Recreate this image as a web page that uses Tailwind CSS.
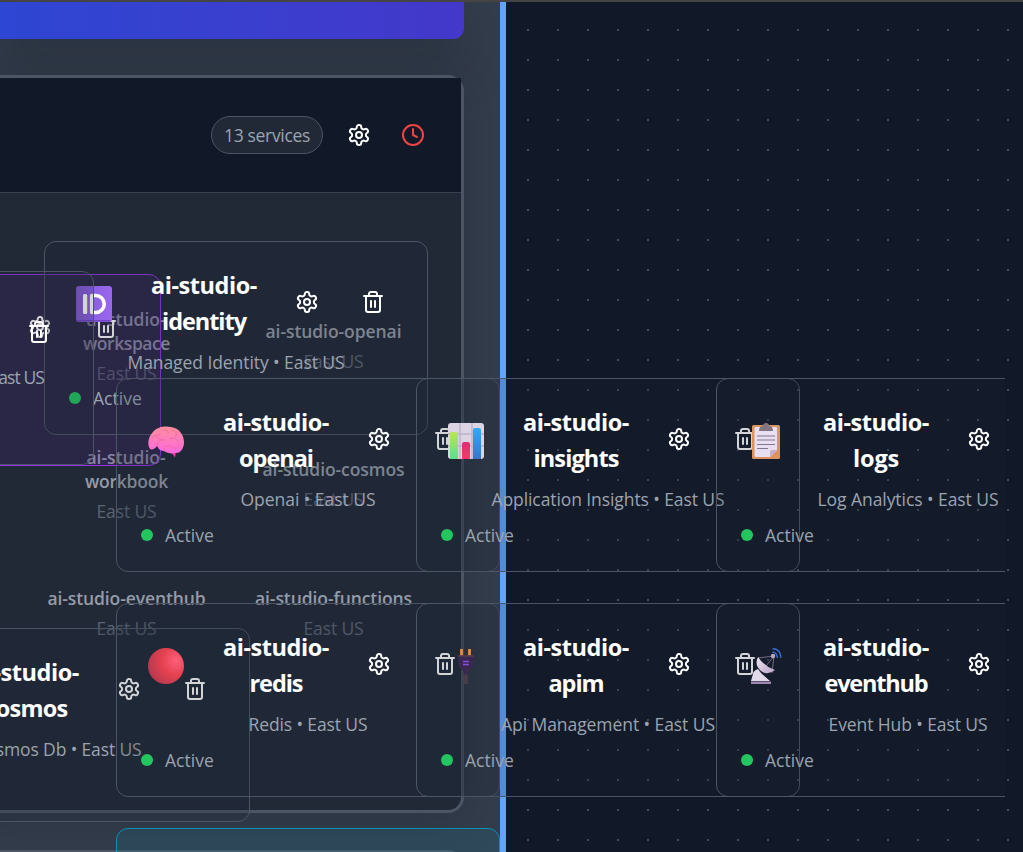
<!DOCTYPE html>
<html lang="en">
<head>
<meta charset="utf-8">
<title>AI Studio architecture</title>
<script src="https://cdn.jsdelivr.net/npm/@tailwindcss/browser@4"></script>
</head>
<body class="bg-[#111827] overflow-hidden font-['Open_Sans','Noto_Sans',sans-serif]">
<svg class="absolute size-0">
  <defs>
    <symbol id="gear" viewBox="0 0 24 24" fill="none" stroke="currentColor" stroke-width="2" stroke-linecap="round" stroke-linejoin="round"><path d="M12.22 2h-.44a2 2 0 0 0-2 2v.18a2 2 0 0 1-1 1.73l-.43.25a2 2 0 0 1-2 0l-.15-.08a2 2 0 0 0-2.73.73l-.22.38a2 2 0 0 0 .73 2.73l.15.1a2 2 0 0 1 1 1.72v.51a2 2 0 0 1-1 1.74l-.15.09a2 2 0 0 0-.73 2.73l.22.38a2 2 0 0 0 2.73.73l.15-.08a2 2 0 0 1 2 0l.43.25a2 2 0 0 1 1 1.73V20a2 2 0 0 0 2 2h.44a2 2 0 0 0 2-2v-.18a2 2 0 0 1 1-1.73l.43-.25a2 2 0 0 1 2 0l.15.08a2 2 0 0 0 2.73-.73l.22-.39a2 2 0 0 0-.73-2.73l-.15-.08a2 2 0 0 1-1-1.74v-.5a2 2 0 0 1 1-1.74l.15-.09a2 2 0 0 0 .73-2.73l-.22-.38a2 2 0 0 0-2.73-.73l-.15.08a2 2 0 0 1-2 0l-.43-.25a2 2 0 0 1-1-1.73V4a2 2 0 0 0-2-2z"/><circle cx="12" cy="12" r="3"/></symbol>
    <symbol id="trash" viewBox="0 0 24 24" fill="none" stroke="currentColor" stroke-width="2" stroke-linecap="round" stroke-linejoin="round"><path d="M3 6h18M19 6v14a2 2 0 0 1-2 2H7a2 2 0 0 1-2-2V6M8 6V4a2 2 0 0 1 2-2h4a2 2 0 0 1 2 2v2M10 11v6M14 11v6"/></symbol>
    <symbol id="clock" viewBox="0 0 24 24" fill="none" stroke="currentColor" stroke-width="2" stroke-linecap="round" stroke-linejoin="round"><circle cx="12" cy="12" r="10"/><path d="M12 6v6l4 2"/></symbol>
    <linearGradient id="gId" x2="1" y2="0"><stop stop-color="#8058d0"/><stop offset="1" stop-color="#9a68f0"/></linearGradient>
    <linearGradient id="gBrain" x2="0" y2="1"><stop stop-color="#ff8f9c"/><stop offset="1" stop-color="#ff68e0"/></linearGradient>
    <radialGradient id="gBall" cx=".78" cy=".35" r=".8"><stop stop-color="#ff5f7d"/><stop offset=".5" stop-color="#e5414f"/><stop offset="1" stop-color="#b93850"/></radialGradient>
    <linearGradient id="gG" x2="0" y2="1"><stop stop-color="#b8e655"/><stop offset="1" stop-color="#5be08c"/></linearGradient>
    <linearGradient id="gB" x2="0" y2="1"><stop stop-color="#34a9f5"/><stop offset="1" stop-color="#3a74c8"/></linearGradient>
    <linearGradient id="gR" x2="0" y2="1"><stop stop-color="#d82f72"/><stop offset="1" stop-color="#f43c68"/></linearGradient>
    <linearGradient id="gDish" x2="1" y2="1"><stop stop-color="#efe6f2"/><stop offset="1" stop-color="#b9a2c6"/></linearGradient>
    <symbol id="e-id" viewBox="0 0 36 36"><rect width="36" height="36" rx="3" fill="url(#gId)"/><rect x="1" y="34" width="34" height="1.500" rx=".7" fill="#7444c4"/><rect x="7" y="8" width="4.200" height="20" rx="1.600" fill="#fff"/><path d="M15.700 9.500h4a8.500 8.500 0 0 1 0 17h-4z" fill="none" stroke="#fff" stroke-width="3.600" stroke-linejoin="round"/></symbol>
    <symbol id="e-brain" viewBox="0 0 36 36"><g transform="translate(0 3)"><path d="M23 26l4 5.500.8-5z" fill="#ff2eb5"/><path d="M2 23C-1 18 0 11 5 6 10 0 18 0 23 1c8 1 13 8 13 15 0 6-3 11-8 11-5 1-9 0-12-2-5 0-6-4-7-5-2 3-5 4-7 3z" fill="url(#gBrain)"/><path d="M9 20c0-5 4-7 8-6M4 12c2-4 5-1 8-4M16 25c-1-4 3-7 8-4s7 0 8-3M15 5c3-3 6 0 5 3m3-4c5 0 7 3 4 7m-5 2c4-2 7 0 8 3M8 11l5 3" fill="none" stroke="#ee6797" stroke-width=".8" stroke-linecap="round"/></g></symbol>
    <symbol id="e-chart" viewBox="0 0 36 36"><rect width="36" height="36" rx="3" fill="#dcd3e3"/><path d="M0 11h36M0 23h36M12 0v36M24 0v36" stroke="#bdb2c9" stroke-width="1.400"/><path d="M2 36V11q0-2 2-2h4q2 0 2 2v25z" fill="url(#gG)"/><path d="M14 36V21q0-2 2-2h4q2 0 2 2v15z" fill="url(#gR)"/><path d="M25 36V7q0-2 2-2h4q2 0 2 2v29z" fill="url(#gB)"/></symbol>
    <symbol id="e-clip" viewBox="0 0 36 36"><rect x="4" y="2" width="28" height="34" rx="1.500" fill="#dd935b"/><path d="M6.500 5q0-1 1-1h20q1.500 0 1.500 1v22l-7 7H8q-1.500 0-1.500-1.500z" fill="#e8dff1"/><path d="M29 27l-7 7v-5q0-2 2-2z" fill="#c1b1d1"/><path d="M9 13h18M9 17h18M9 21.500h18M9 25.500h11" stroke="#817790" stroke-width="1.200"/><path d="M11 8q0-5 4-5a3 3 0 0 1 6 0q4 0 4 5z" fill="#83757f"/></symbol>
    <symbol id="e-ball" viewBox="0 0 36 36"><circle cx="18" cy="18" r="18" fill="url(#gBall)"/></symbol>
    <symbol id="e-plug" viewBox="0 0 36 36"><path d="M13.500 1v7M21.500 1v7" stroke="#d8924f" stroke-width="2.800"/><path d="M18 24v12" stroke="#4d3d4c" stroke-width="3.600"/><path d="M9.500 7.500h17v3h-1v6q-1 5-5 6v4h-5v-4q-4-1-5-6v-6h-1z" fill="#3a2850"/><path d="M10 8h16" stroke="#54434f" stroke-width="1.400"/><path d="M15 13.500h6M15 16.500h6" stroke="#8450e0" stroke-width="1.600"/></symbol>
    <symbol id="e-dish" viewBox="0 0 36 36"><path d="M10 21q-5 2-5 5l-2 7h19l-9-8z" fill="#e3d9ea"/><rect x="3" y="33.500" width="20" height="2.500" fill="#9e88ae"/><path d="M10 10l16-2-2 17M26 8l-8 10" stroke="#76697f" stroke-width="1" fill="none"/><path d="M10 9q-4 8 3 14 7 5 14-1Q16 18 10 9z" fill="url(#gDish)"/><circle cx="25" cy="8" r="2.200" fill="#b7a8c0"/><path d="M24.500 4q4 0 5 6M24.500.8q8 0 8.500 9" fill="none" stroke="#3a6bd4" stroke-width="1.500"/></symbol>
  </defs>
</svg>

<main class="relative w-[1023px] h-[852px] overflow-hidden flex bg-[#111827]">
  <section class="relative w-[500px] h-full shrink-0 overflow-hidden bg-[#343d4c]">
    <div class="h-[39px] w-[464px] rounded-br-[11px] bg-linear-to-r from-[#2d46d3] to-[#4338ca] shadow-[0_20px_50px_0px_rgba(20,30,38,0.4)]"></div>
    <div class="mt-9 -ml-5 w-[484px] h-[738px] border-3 border-[#4b5563] rounded-[16px] bg-[#212937] shadow-[0_8px_40px_rgba(22,30,40,0.28)]">
      <header class="h-[115px] border-b border-[#374151] bg-[#111827] flex items-center justify-end gap-[30px] pr-9">
        <span class="h-[38px] w-[112px] -mr-[6px] rounded-full border border-[#4b5563] bg-[#212937] flex items-center justify-center text-[#9ca3af] text-[17.500px]"><span data-w="85">13 services</span></span>
        <svg class="size-6 text-white"><use href="#gear"/></svg>
        <svg class="size-6 text-[#ef4444]"><use href="#clock"/></svg>
      </header>
    </div>
    <div class="mt-[37px] -ml-5 w-[484px] h-[60px] border-3 border-[#4b5563] rounded-[16px] bg-[#212937]"></div>
  </section>
  <div class="w-[6px] h-full shrink-0 bg-[#60a5fa]"></div>
  <section class="flex-1 bg-[#111827] bg-[radial-gradient(circle,#434c5b_1.200px,transparent_1.500px)] bg-size-[30px_30px] bg-position-[7px_15px]"></section>

  <div id="canvas" class="absolute inset-y-0 left-0 w-[1005px] overflow-hidden"></div>
  <div class="absolute top-0 left-0 w-full h-[2px] bg-[#444444]"></div>
</main>

<script>
const canvas = document.getElementById('canvas');
const html = [];

const label = (cx, y, w, text) => html.push(`<div class="absolute w-[240px] h-6 leading-6 -translate-x-1/2 text-center whitespace-nowrap text-[17.500px] font-semibold text-[#949ba7]" style="left:${cx}px;top:${y - 13}px"><span data-w="${w}">${text}</span></div>`);
const region = (cx, y) => html.push(`<div class="absolute w-[100px] h-6 leading-6 -translate-x-1/2 text-center whitespace-nowrap text-[17.500px] text-[#5b6472]" style="left:${cx}px;top:${y - 13}px"><span data-w="59">East US</span></div>`);

label(126, 320, 78, 'ai-studio-'); label(126.5, 344, 86, 'workspace'); region(126.5, 374);
label(333.5, 332, 135, 'ai-studio-openai'); region(333.5, 362);
label(126, 458, 78, 'ai-studio-'); label(126.5, 482, 82, 'workbook'); region(126.5, 512);
label(333.5, 470, 141, 'ai-studio-cosmos'); region(333.5, 500);
label(126.5, 599, 157, 'ai-studio-eventhub'); region(126.5, 629);
label(333.5, 599, 156, 'ai-studio-functions'); region(333.5, 629);

html.push(`<div class="absolute w-[384px] h-[192px] rounded-[12px] border border-[#9333ea] bg-[#68229e]/18" style="left:-223px;top:274px">
  <svg class="absolute left-[250px] top-[40px] size-6 text-white"><use href="#gear"/></svg>
  <svg class="absolute left-[316px] top-[40px] size-6 text-white"><use href="#trash"/></svg></div>`);

const card = (x, y, icon, name, nameW, sub, subW, subTop = 106) => html.push(`<article class="absolute w-[384px] h-[194px] rounded-[12px] border border-[#4b5563] bg-[#1f2937]/20" style="left:${x}px;top:${y}px">
  <svg class="absolute left-[31px] top-[44px] size-9"><use href="#${icon}"/></svg>
  <h3 class="absolute left-[79px] top-[25px] w-[160px] text-center text-[23.500px] leading-9 font-bold text-white whitespace-nowrap"><span data-w="105">ai-studio-</span><br><span data-w="${nameW}">${name}</span></h3>
  <svg class="absolute left-[250px] top-[48px] size-6 text-white"><use href="#gear"/></svg>
  <svg class="absolute left-[316px] top-[48px] size-6 text-white"><use href="#trash"/></svg>
  <p class="absolute left-[31px] w-[320px] text-center text-[17.500px] leading-7 text-[#9ca3af] whitespace-nowrap" style="top:${subTop}px"><span data-w="${subW}">${sub} • East US</span></p>
  <div class="absolute left-[24px] top-[142px] flex items-center gap-3 text-[17.500px] leading-7 text-[#9ca3af]"><span class="size-3 rounded-full bg-[#22c55e]"></span><span data-w="48">Active</span></div>
</article>`);

card(44, 241, 'e-id', 'identity', 83, 'Managed Identity', 216);
card(-290, 271, 'e-id', 'workspace', 110, 'Machine Learning Workspace', 283, 91);
card(-134, 628, 'e-id', 'cosmos', 82, 'Cosmos Db', 166);
card(116, 378, 'e-brain', 'openai', 73, 'Openai', 134);
card(416, 378, 'e-chart', 'insights', 84, 'Application Insights', 232);
card(716, 378, 'e-clip', 'logs', 45, 'Log Analytics', 180);
card(116, 603, 'e-ball', 'redis', 52, 'Redis', 118);
card(416, 603, 'e-plug', 'apim', 54, 'Api Management', 213);
card(716, 603, 'e-dish', 'eventhub', 102, 'Event Hub', 158);
html.push(`<div class="absolute w-[384px] h-[192px] rounded-[12px] border border-[#0891b2] bg-cyan-500/10" style="left:116px;top:828px"></div>`);
canvas.innerHTML = html.join('');

const fit = () => document.querySelectorAll('[data-w]').forEach(el => {
  el.style.letterSpacing = '0px';
  const gap = Number(el.dataset.w) + 1 - el.getBoundingClientRect().width;
  el.style.letterSpacing = gap / el.textContent.length + 'px';
});
fit();
window.addEventListener('load', fit);
requestAnimationFrame(() => requestAnimationFrame(fit));
document.fonts.ready.then(fit);
</script>
</body>
</html>
